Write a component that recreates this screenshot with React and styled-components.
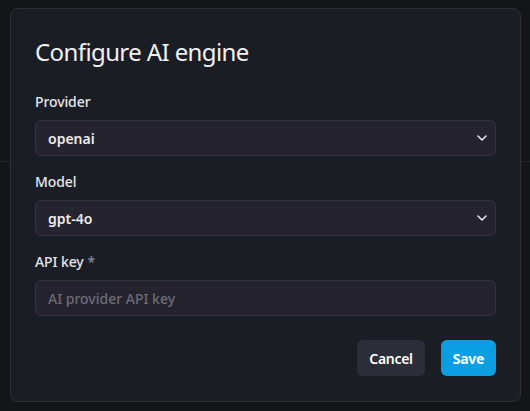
import React from 'react';
import styled, { createGlobalStyle } from 'styled-components';

const GlobalStyle = createGlobalStyle`
    html, body {
        margin: 0;
        padding: 0;
        background: #141519;
        font-family: "Noto Sans", "Open Sans", sans-serif;
        color: #ececf0;
    }
    * { box-sizing: border-box; }
`;

const Page = styled.div`
    position: relative;
    width: 530px;
    height: 411px;
    overflow: hidden;
`;

const PageHeader = styled.div`
    height: 162px;
    border-bottom: 1px solid #23242b;
`;

const Dialog = styled.div`
    position: absolute;
    left: 10px;
    top: 8px;
    width: 511px;
    height: 394px;
    background: #1b1d24;
    border: 1px solid #2f3037;
    border-radius: 8px;
    padding: 27px 24px 24px;
    display: flex;
    flex-direction: column;
`;

const Title = styled.h2`
    margin: 0 0 24px;
    font-size: 24px;
    line-height: 32px;
    font-weight: 400;
    color: #f1f1f4;
    letter-spacing: -0.6px;
`;

const Fields = styled.div`
    display: flex;
    flex-direction: column;
    gap: 16px;
`;

const Field = styled.div`
    display: flex;
    flex-direction: column;
    gap: 8px;
`;

const Label = styled.label`
    font-size: 14px;
    line-height: 20px;
    font-weight: 500;
    color: #e6e6ea;
    letter-spacing: -0.1px;
`;

const Required = styled.span`
    color: #8a8a92;
    margin-left: 4px;
`;

const Box = styled.div`
    height: 36px;
    background: #25242e;
    border: 1px solid #35353d;
    border-radius: 6px;
    padding: 0 8px 0 12px;
    display: flex;
    align-items: center;
    justify-content: space-between;
    font-size: 14px;
    font-weight: ${p => (p.$placeholder ? 500 : 600)};
    color: ${p => (p.$placeholder ? '#6c6c75' : '#ececf0')};
`;

const Chevron = () => (
    <svg width="10" height="6" viewBox="0 0 10 6" fill="none">
        <polyline points="1,1 5,5 9,1" stroke="#e8e8ec" strokeWidth="1.6" strokeLinecap="round" strokeLinejoin="round" />
    </svg>
);

const Actions = styled.div`
    margin-top: 24px;
    display: flex;
    justify-content: flex-end;
    gap: 16px;
`;

const Button = styled.button`
    height: 36px;
    padding: 0 12px;
    border: none;
    border-radius: 6px;
    font-family: inherit;
    font-size: 14px;
    letter-spacing: -0.3px;
    font-weight: ${p => (p.$primary ? 700 : 600)};
    color: #ffffff;
    background: ${p => (p.$primary ? '#0c9ee2' : '#2b2d38')};
`;

export default function App() {
    return (
        <Page>
            <GlobalStyle />
            <PageHeader />
            <Dialog>
                <Title>Configure AI engine</Title>
                <Fields>
                    <Field>
                        <Label>Provider</Label>
                        <Box>openai<Chevron /></Box>
                    </Field>
                    <Field>
                        <Label>Model</Label>
                        <Box>gpt-4o<Chevron /></Box>
                    </Field>
                    <Field>
                        <Label>API key<Required>*</Required></Label>
                        <Box $placeholder>AI provider API key</Box>
                    </Field>
                </Fields>
                <Actions>
                    <Button>Cancel</Button>
                    <Button $primary>Save</Button>
                </Actions>
            </Dialog>
        </Page>
    );
}
